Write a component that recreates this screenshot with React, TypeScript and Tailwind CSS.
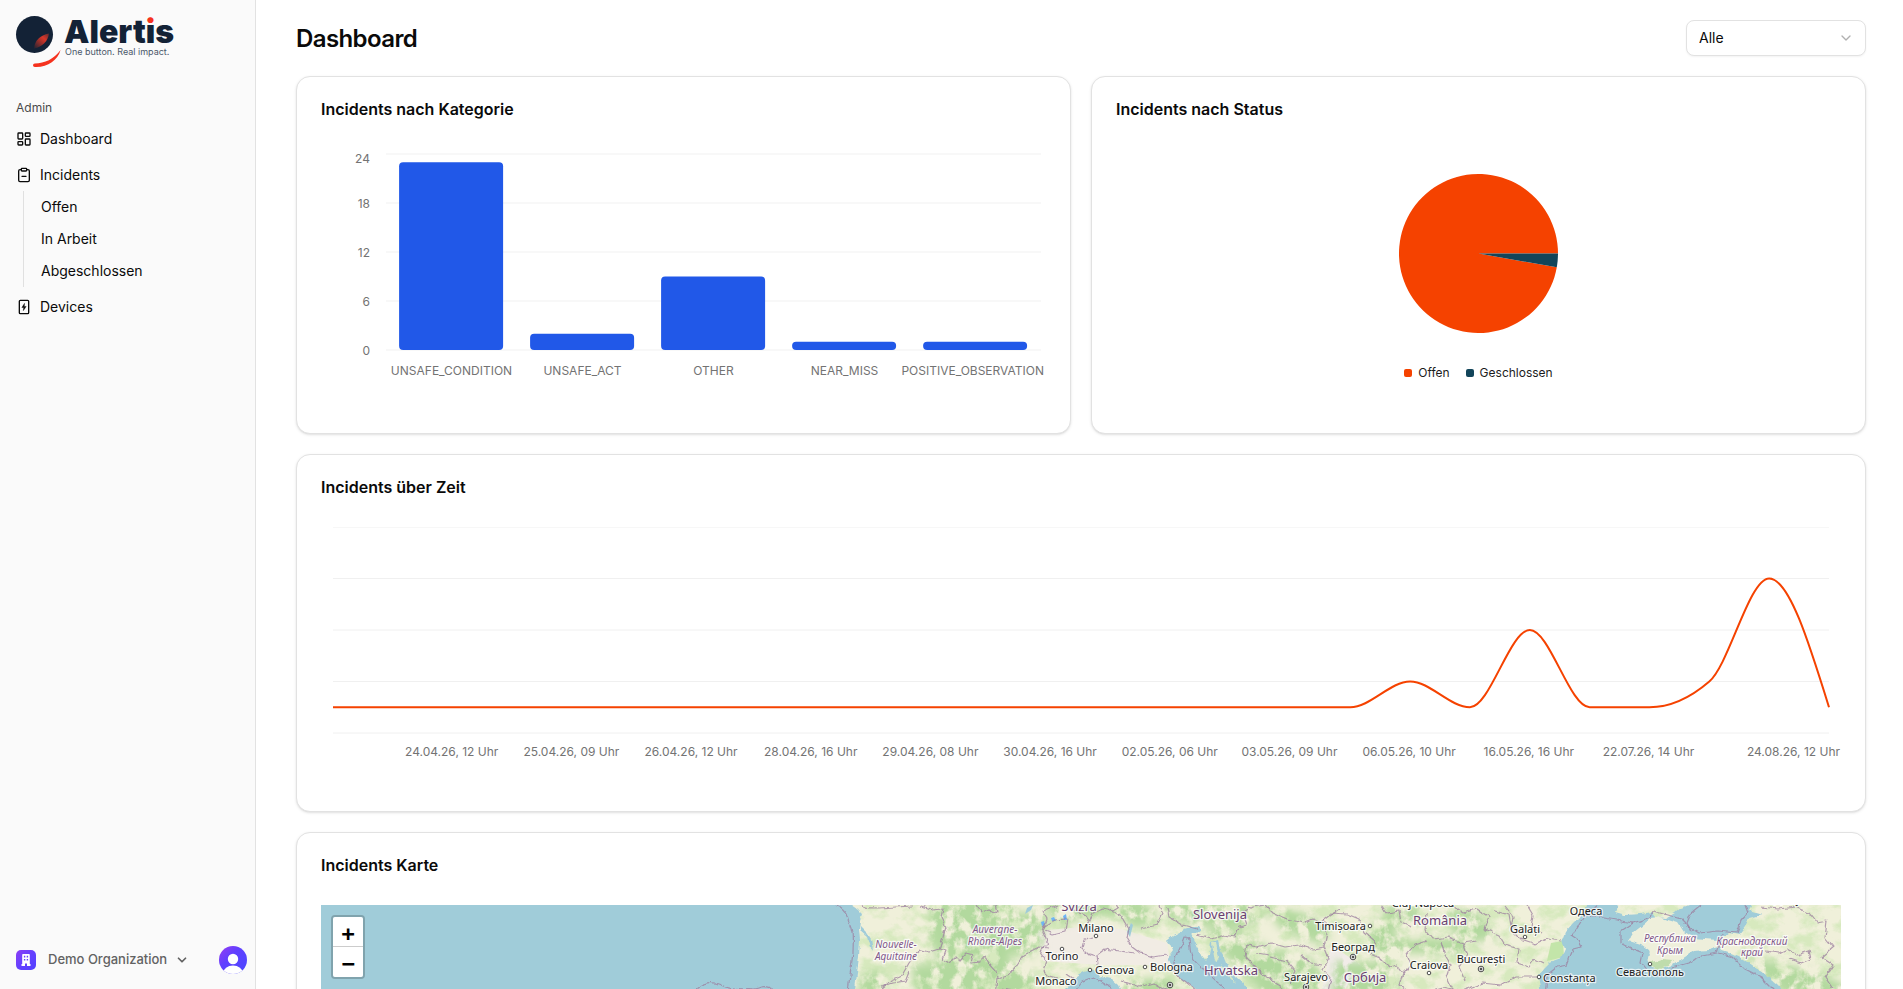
import { useLayoutEffect, useRef, useState } from "react";
import type { ReactNode } from "react";
import { ChevronDown, ClipboardMinus, LayoutDashboard } from "lucide-react";

const AXIS_TEXT = "fill-[#737373] text-xs";

function useWidth(initial: number) {
  const ref = useRef<HTMLDivElement>(null);
  const [width, setWidth] = useState(initial);
  useLayoutEffect(() => {
    const el = ref.current;
    if (!el) return;
    const update = () => setWidth(el.clientWidth);
    update();
    const observer = new ResizeObserver(update);
    observer.observe(el);
    return () => observer.disconnect();
  }, []);
  return { ref, width };
}

function Logo() {
  return (
    <svg width="168" height="56" viewBox="0 0 168 56" className="overflow-visible" role="img" aria-label="Alertis">
      <defs>
        <linearGradient id="leaf" x1="1" y1="0" x2="0.1" y2="1">
          <stop offset="0" stopColor="#5a2a30" />
          <stop offset="0.35" stopColor="#d8372a" />
          <stop offset="0.55" stopColor="#a93029" />
          <stop offset="1" stopColor="#2a2432" />
        </linearGradient>
        <linearGradient id="letter-i" gradientUnits="userSpaceOnUse" x1="0" y1="0" x2="0" y2="27">
          <stop offset="0.32" stopColor="#f5321e" />
          <stop offset="0.32" stopColor="#132236" />
        </linearGradient>
      </defs>
      <circle cx="18.5" cy="18.5" r="18.5" fill="#132236" />
      <path d="M18 32.5C18.5 25 24 19 33 17.5C32 25 26.5 31 18 32.5Z" fill="url(#leaf)" />
      <path
        d="M18.8 47.4C29 47.2 37.5 43.5 44.6 34C41.5 44.5 31.5 51.6 18.8 51A1.8 1.8 0 0 1 18.8 47.4Z"
        fill="#f5321e"
      />
      <text x="48" y="27" className="fill-[#132236] font-['Inter'] text-[32px] font-black">
        Alert
        <tspan fill="url(#letter-i)">i</tspan>s
      </text>
      <text x="49" y="39" className="fill-[#4b586a] font-['Inter'] text-[9px]">
        One button. Real impact.
      </text>
    </svg>
  );
}

function DeviceIcon() {
  return (
    <svg className="size-4" viewBox="0 0 24 24" fill="none" stroke="currentColor" strokeWidth="2" strokeLinejoin="round" aria-hidden="true">
      <rect x="5" y="2" width="14" height="20" rx="1.5" />
      <path d="M12.8 6.5L8.8 12.8H11.5L11 17.5L15.2 11.2H12.4Z" fill="currentColor" strokeWidth="0.6" />
    </svg>
  );
}

function NavItem({ icon, children }: { icon: ReactNode; children: ReactNode }) {
  return (
    <a href="#" className="flex h-8 items-center gap-2 px-4 text-sm text-neutral-950">
      {icon}
      {children}
    </a>
  );
}

function Sidebar() {
  return (
    <aside className="flex w-64 shrink-0 flex-col border-r border-[#e2e2e2] bg-[#fafafa]">
      <a href="#" className="block px-4 pt-4">
        <Logo />
      </a>
      <nav aria-label="Admin" className="mt-5 flex flex-1 flex-col">
        <div className="flex h-[31px] items-center px-4 text-xs text-[#4a4a4a]">Admin</div>
        <ul className="flex flex-col gap-1">
          <li>
            <NavItem icon={<LayoutDashboard className="size-4" />}>Dashboard</NavItem>
          </li>
          <li>
            <NavItem icon={<ClipboardMinus className="size-4" />}>Incidents</NavItem>
            <ul className="ml-[23px] border-l border-[#e0e0e0]">
              {["Offen", "In Arbeit", "Abgeschlossen"].map((label) => (
                <li key={label}>
                  <a href="#" className="flex h-8 items-center pl-[17px] text-sm text-neutral-950">
                    {label}
                  </a>
                </li>
              ))}
            </ul>
          </li>
          <li>
            <NavItem icon={<DeviceIcon />}>Devices</NavItem>
          </li>
        </ul>
      </nav>
      <div className="flex items-center justify-between pr-2 pb-[15px] pl-4">
        <button type="button" className="flex items-center gap-3 text-[13px] font-medium text-[#626262]">
          <span className="flex size-5 items-center justify-center rounded-[5px] bg-linear-to-br from-[#8b3df5] via-[#6340ff] to-[#5340ff]">
            <svg width="10" height="12" viewBox="0 0 10 12" aria-hidden="true">
              <path
                fill="#fff"
                fillRule="evenodd"
                d="M1.2 1C1.2.4 1.6 0 2.2 0H7.8C8.4 0 8.8.4 8.8 1V10H9.5V12H6V9.4H4V12H.5V10H1.2ZM2.9 1.8V3.4H4.3V1.8ZM5.7 1.8V3.4H7.1V1.8ZM2.9 5V6.6H4.3V5ZM5.7 5V6.6H7.1V5Z"
              />
            </svg>
          </span>
          <span className="flex items-center gap-2">
            Demo Organization
            <ChevronDown className="size-3.5" strokeWidth={3} />
          </span>
        </button>
        <button type="button" aria-label="Konto" className="size-7 overflow-hidden rounded-full">
          <svg viewBox="0 0 28 28" className="size-7" aria-hidden="true">
            <defs>
              <linearGradient id="avatar" x1="0" y1="0" x2="1" y2="1">
                <stop offset="0.1" stopColor="#8b3df5" />
                <stop offset="0.4" stopColor="#6040ff" />
                <stop offset="1" stopColor="#4a48ff" />
              </linearGradient>
            </defs>
            <rect width="28" height="28" fill="url(#avatar)" />
            <circle cx="14" cy="13" r="5.2" fill="#fff" />
            <ellipse cx="14" cy="27" rx="9.8" ry="7.4" fill="#fff" />
          </svg>
        </button>
      </div>
    </aside>
  );
}

function Card({ title, children }: { title: string; children: ReactNode }) {
  return (
    <section className="flex min-w-0 flex-col gap-8 rounded-[14px] border border-[#e2e2e2] bg-white p-6 shadow-sm">
      <h2 className="text-base leading-4 font-semibold">{title}</h2>
      {children}
    </section>
  );
}

const CATEGORIES = [
  { name: "UNSAFE_CONDITION", value: 23 },
  { name: "UNSAFE_ACT", value: 2 },
  { name: "OTHER", value: 9 },
  { name: "NEAR_MISS", value: 1 },
  { name: "POSITIVE_OBSERVATION", value: 1 },
];

function BarChart() {
  const { ref, width } = useWidth(725);
  const left = 65;
  const right = width - 5;
  const top = 5;
  const bottom = 201;
  const band = (right - left) / CATEGORIES.length;
  const y = (v: number) => bottom - (v / 24) * (bottom - top);
  return (
    <div ref={ref} className="h-65">
      <svg width={width} height="260" role="img" aria-label="Incidents nach Kategorie">
        {[0, 6, 12, 18, 24].map((tick) => (
          <g key={tick}>
            <line x1={left} x2={right} y1={y(tick)} y2={y(tick)} stroke="#f1f1f1" />
            <text x={left - 16} y={tick === 24 ? y(tick) + 9 : y(tick) + 5} textAnchor="end" className={AXIS_TEXT}>
              {tick}
            </text>
          </g>
        ))}
        {CATEGORIES.map((c, i) => {
          const last = i === CATEGORIES.length - 1;
          return (
            <g key={c.name}>
              <rect
                x={left + band * (i + 0.1)}
                y={y(c.value)}
                width={Math.floor(band * 0.8)}
                height={bottom - y(c.value)}
                rx="4"
                fill="#2158e8"
              />
              <text
                x={last ? width - 2 : left + band * (i + 0.5)}
                y={bottom + 25}
                textAnchor={last ? "end" : "middle"}
                className={AXIS_TEXT}
              >
                {c.name}
              </text>
            </g>
          );
        })}
      </svg>
    </div>
  );
}

function PieChart() {
  const r = 79.5;
  const angle = (10 * Math.PI) / 180;
  const x = r * Math.cos(angle);
  const y = r * Math.sin(angle);
  return (
    <div className="flex h-65 flex-col items-center pt-[25px]">
      <svg width="159" height="159" viewBox="-79.5 -79.5 159 159" role="img" aria-label="Incidents nach Status">
        <path d={`M0 0L${r} 0A${r} ${r} 0 1 0 ${x} ${y}Z`} fill="#f54200" />
        <path d={`M0 0L${r} 0A${r} ${r} 0 0 1 ${x} ${y}Z`} fill="#12455a" />
      </svg>
      <ul className="mt-8 flex items-center gap-4 text-xs text-[#1c1c1c]">
        <li className="flex items-center gap-1.5">
          <span className="size-2 rounded-xs bg-[#f54200]" />
          Offen
        </li>
        <li className="flex items-center gap-1.5">
          <span className="size-2 rounded-xs bg-[#12455a]" />
          Geschlossen
        </li>
      </ul>
    </div>
  );
}

const TIMELINE = [1, 1, 1, 1, 1, 1, 1, 1, 1, 1, 1, 1, 1, 1, 1, 1, 1, 1, 2, 1, 4, 1, 1, 2, 6, 1];

const TIME_LABELS = [
  { index: 2, text: "24.04.26, 12 Uhr" },
  { index: 4, text: "25.04.26, 09 Uhr" },
  { index: 6, text: "26.04.26, 12 Uhr" },
  { index: 8, text: "28.04.26, 16 Uhr" },
  { index: 10, text: "29.04.26, 08 Uhr" },
  { index: 12, text: "30.04.26, 16 Uhr" },
  { index: 14, text: "02.05.26, 06 Uhr" },
  { index: 16, text: "03.05.26, 09 Uhr" },
  { index: 18, text: "06.05.26, 10 Uhr" },
  { index: 20, text: "16.05.26, 16 Uhr" },
  { index: 22, text: "22.07.26, 14 Uhr" },
  { index: 25, text: "24.08.26, 12 Uhr" },
];

// Monotone cubic interpolation over evenly spaced points.
function monotonePath(xs: number[], ys: number[]) {
  const n = xs.length;
  const h = xs[1] - xs[0];
  const slopes = ys.slice(1).map((v, i) => (v - ys[i]) / h);
  const tangents = ys.map((_, i) => {
    if (i === 0 || i === n - 1) return 0;
    const a = slopes[i - 1];
    const b = slopes[i];
    const p = (a + b) / 2;
    return (Math.sign(a) + Math.sign(b)) * Math.min(Math.abs(a), Math.abs(b), 0.5 * Math.abs(p)) || 0;
  });
  tangents[0] = (3 * slopes[0] - tangents[1]) / 2;
  tangents[n - 1] = (3 * slopes[n - 2] - tangents[n - 2]) / 2;
  let d = `M${xs[0]} ${ys[0]}`;
  for (let i = 1; i < n; i++) {
    const t = h / 3;
    d += `C${xs[i - 1] + t} ${ys[i - 1] + t * tangents[i - 1]} ${xs[i] - t} ${ys[i] - t * tangents[i]} ${xs[i]} ${ys[i]}`;
  }
  return d;
}

function LineChart() {
  const { ref, width } = useWidth(1520);
  const left = 12;
  const right = width - 12;
  const bottom = 206;
  const y = (v: number) => bottom - (v / 8) * bottom;
  const x = (i: number) => left + (i * (right - left)) / (TIMELINE.length - 1);
  return (
    <div ref={ref} className="h-65">
      <svg width={width} height="260" role="img" aria-label="Incidents über Zeit">
        {[0, 2, 4, 6, 8].map((tick) => (
          <line key={tick} x1={left} x2={right} y1={y(tick)} y2={y(tick)} stroke="#f0f0f0" />
        ))}
        <path
          d={monotonePath(TIMELINE.map((_, i) => x(i)), TIMELINE.map(y))}
          fill="none"
          stroke="#f54200"
          strokeWidth="2"
        />
        {TIME_LABELS.map((label) => {
          const last = label.index === TIMELINE.length - 1;
          return (
            <text
              key={label.text}
              x={last ? width - 1 : x(label.index) - 1}
              y={bottom + 23}
              textAnchor={last ? "end" : "middle"}
              className={AXIS_TEXT}
            >
              {label.text}
            </text>
          );
        })}
      </svg>
    </div>
  );
}

type Place = { x: number; y: number; text: string; anchor?: "start" | "middle" | "end" };

const CITIES: Place[] = [
  { x: 775, y: 27, text: "Milano" },
  { x: 741, y: 55, text: "Torino" },
  { x: 774, y: 69, text: "Genova", anchor: "start" },
  { x: 829, y: 66, text: "Bologna", anchor: "start" },
  { x: 735, y: 80, text: "Monaco" },
  { x: 985, y: 76, text: "Sarajevo" },
  { x: 1045, y: 25, text: "Timișoara", anchor: "end" },
  { x: 1032, y: 46, text: "Београд" },
  { x: 1102, y: 2, text: "Cluj-Napoca" },
  { x: 1204, y: 28, text: "Galați" },
  { x: 1160, y: 58, text: "București" },
  { x: 1108, y: 64, text: "Craiova" },
  { x: 1222, y: 77, text: "Constanța", anchor: "start" },
  { x: 1265, y: 10, text: "Одеса" },
  { x: 1329, y: 71, text: "Севастополь" },
  { x: 1480, y: -2, text: "Ростов-на-Дону", anchor: "end" },
];

const COUNTRIES: Place[] = [
  { x: 758, y: 6, text: "Svizra" },
  { x: 899, y: 14, text: "Slovenija" },
  { x: 910, y: 70, text: "Hrvatska" },
  { x: 1119, y: 20, text: "România" },
  { x: 1044, y: 77, text: "Србија" },
];

const REGIONS: Place[] = [
  { x: 674, y: 28, text: "Auvergne-" },
  { x: 674, y: 40, text: "Rhône-Alpes" },
  { x: 575, y: 43, text: "Nouvelle-" },
  { x: 575, y: 55, text: "Aquitaine" },
  { x: 1349, y: 37, text: "Республика" },
  { x: 1349, y: 49, text: "Крым" },
  { x: 1431, y: 40, text: "Краснодарский" },
  { x: 1431, y: 51, text: "край" },
];

const TOWN_MARKS = [
  [775, 31], [741, 44], [769, 65], [824, 62], [1049, 21], [1204, 32], [1108, 68], [1218, 72], [1329, 59],
];

const CAPITAL_MARKS = [
  [849, 80], [985, 82], [1032, 52], [1160, 64],
];

const SEAS = [
  "M-10 -10H526L530 0L536 4L541 9L539 15L538 25L539 35L538 52L536 68L534 84L530 120L500 140L400 150L-10 160Z",
  "M539 20L545 26L550 34L552 46L549 42L546 32L539 26Z",
  "M730 92L745 84L755 72L763 67L770 65L775 66L780 72L791 74L798 80L801 86L812 130L800 200H640L660 110Z",
  "M846 35L852 30L863 24L870 22L878 21L881 25L876 29L870 29L873 36L876 43L882 52L885 56L888 50L890 38L897 36L899 45L904 53L908 63L915 72L923 79L932 88L990 150L940 160L875 84L862 75L855 68L850 59L847 53L852 46L849 39Z",
  "M1268 -6H1300L1294 7L1305 10L1320 9L1331 7L1335 12L1345 13L1354 8L1360 3L1384 -6H1434L1428 6L1441 10L1428 13L1424 22L1418 30L1408 28L1403 32L1398 40L1401 46L1411 49L1422 54L1430 60L1445 70L1455 78L1461 84L1520 120V240H1200L1219 84L1217 70L1223 63L1229 57L1240 53L1244 44L1241 35L1244 27L1252 18L1264 6Z",
];

const BORDERS = [
  "M516 0C524 6 528 12 529 18C534 28 532 36 532 48C530 62 528 76 527 90",
  "M540 0C546 5 552 2 558 3L575 2L592 1M600 1L612 5L622 4L620 12L625 22L622 32L618 44L625 46L622 54L628 58L634 52L638 56L645 48L652 50L650 58L660 57L664 52L668 58",
  "M618 44L608 47L600 45L594 50L588 58L580 72L570 76L560 84",
  "M655 0L660 7L668 4L676 8L674 0",
  "M668 58L675 66L676 74L688 70L694 62L702 50L710 46L718 42L728 43",
  "M560 82L572 78L584 76L588 66M676 74L674 90M665 92L680 84L694 86",
  "M736 0L721 6L726 14L722 26L727 38L719 46L726 56L722 66L728 72L736 74",
  "M722 22L734 15L746 14L744 26L732 29L724 26",
  "M748 0L752 6L762 8L768 17L772 8L782 4L790 6L797 2L794 -4",
  "M790 6L800 10L808 24L806 32L812 42L820 48L832 52L846 50",
  "M777 60L776 50L784 44L798 46L814 48M760 42L768 50L776 52M762 42L764 34L772 32",
  "M800 76L818 82L832 78L842 84L860 90M745 69L752 74",
  "M820 24L836 20L842 8L838 0M846 2L848 12L862 20L876 24",
  "M876 30L890 34L904 30L914 32L918 22L926 20L922 8L932 2L944 0",
  "M944 0L952 8L966 14L982 18L992 14L1000 18L1010 10L1019 4",
  "M926 40L936 42L950 38L964 42L978 40L992 44L1003 42",
  "M926 40L924 52L934 62L946 72L958 80L972 92",
  "M1003 14L1006 28L1003 42L1008 54L1002 64L1010 74L1006 90",
  "M950 52L966 56L974 66L968 78M980 50L990 58L1000 60M936 48L948 50",
  "M1009 8L1026 9L1038 14L1044 28L1054 36L1050 50L1060 54L1068 62L1076 60L1082 68L1078 80L1090 88",
  "M1082 68L1090 60L1086 50L1094 40L1106 36M1106 8L1104 24L1112 34L1128 32L1142 38L1156 36",
  "M1120 36L1124 50L1130 60L1126 72L1132 84M1142 38L1146 50L1138 62L1144 76",
  "M1060 0L1066 8L1078 6L1080 18L1090 22M1130 0L1142 8L1156 4L1168 12L1164 24L1178 30L1184 40",
  "M1174 6L1188 10L1190 22L1200 26M1184 40L1198 44L1196 58L1208 62L1214 54L1222 58",
  "M1184 2L1192 12L1190 24L1202 36L1214 40L1226 34L1240 36M1206 0L1212 10L1210 22L1222 28",
  "M1066 92L1084 86L1100 88L1122 82L1140 86L1162 78L1180 80L1194 72L1218 72",
  "M1276 0L1266 8L1256 24L1250 30L1256 34L1260 42L1252 44L1246 60L1236 62L1226 70L1224 92",
  "M1266 10L1290 14L1312 18L1330 12L1332 6L1346 10L1360 14L1368 22L1378 28L1396 26L1416 28L1420 16L1427 8L1424 0",
  "M1312 18L1300 26L1300 38L1312 44L1322 48L1320 58L1326 66L1340 70L1354 62L1368 58L1376 52L1396 48L1398 42L1401 30",
  "M1398 48L1412 52L1424 64L1440 72L1452 84L1456 92",
  "M1380 0L1370 8L1366 18L1370 26M1440 2L1458 4L1474 2L1488 8L1496 18L1506 16L1504 32L1512 42L1500 52L1512 60L1504 72L1512 84",
  "M1444 46L1458 48L1466 44L1476 50L1488 46L1490 54L1480 58L1468 54",
  "M754 86L762 76L772 72L784 78L790 84L794 92",
  "M882 92C868 76 852 72 852 62C854 48 862 40 864 32C872 32 866 44 872 54C880 64 896 74 912 94",
  "M375 84C382 78 390 75 400 80C412 86 430 86 440 82C448 80 454 86 462 90",
];

const FORESTS = [
  "M612 -6L690 -8L700 20L688 60L650 66L616 54L606 24Z",
  "M540 70L560 64L568 80L556 120L534 110Z",
  "M690 10L724 4L722 40L706 54L690 46Z",
  "M590 60L640 56L700 60L720 76L740 100L600 110Z",
  "M722 -4L820 -6L838 14L816 24L790 10L760 14L736 20Z",
  "M836 -6L936 -4L944 14L914 24L870 20L846 12Z",
  "M800 76L846 72L870 100L810 110Z",
  "M884 24L920 26L950 44L990 52L1004 80L1000 110L950 100L920 66L898 46Z",
  "M942 0L960 24L1000 40L1010 30L990 10Z",
  "M1052 18L1076 8L1074 32L1090 36L1150 30L1146 50L1080 48L1062 60L1044 40Z",
  "M1126 4L1156 6L1178 32L1152 38L1130 26Z",
  "M1014 56L1070 58L1080 84L1060 110L1010 100Z",
  "M1424 54L1450 56L1500 68L1530 84V120L1470 96Z",
  "M1326 56L1346 54L1354 62L1338 68Z",
  "M1060 -4L1080 4L1100 0L1096 24L1070 20Z",
];

function MapLabels({ places, className }: { places: Place[]; className: string }) {
  return (
    <g className={className} stroke="#fff" strokeOpacity="0.75" strokeWidth="2.5" strokeLinejoin="round" paintOrder="stroke">
      {places.map((p) => (
        <text key={p.text} x={p.x} y={p.y} textAnchor={p.anchor ?? "middle"}>
          {p.text}
        </text>
      ))}
    </g>
  );
}

function IncidentMap() {
  return (
    <div className="relative h-80 overflow-hidden bg-[#a0ccd9]">
      <svg className="size-full" viewBox="0 0 1520 320" preserveAspectRatio="xMidYMin slice" role="img" aria-label="Incidents Karte">
        <defs>
          <filter id="relief" x="0" y="0" width="100%" height="100%" colorInterpolationFilters="sRGB">
            <feTurbulence type="fractalNoise" baseFrequency="0.05 0.07" numOctaves="5" seed="8" />
            <feColorMatrix values="0 0 0 0 0.78  0 0 0 0 0.9  0 0 0 0 0.68  0 4 0 0 -1.75" />
          </filter>
          <filter id="woods" x="-10%" y="-10%" width="120%" height="120%" colorInterpolationFilters="sRGB">
            <feGaussianBlur in="SourceAlpha" stdDeviation="4" result="area" />
            <feTurbulence type="fractalNoise" baseFrequency="0.09 0.07" numOctaves="5" seed="3" />
            <feColorMatrix values="0 0 0 0 0.7  0 0 0 0 0.85  0 0 0 0 0.62  0 4.5 0 0 -1.6" />
            <feComposite in2="area" operator="in" />
          </filter>
          <filter id="shore" x="-2%" y="-2%" width="104%" height="104%" colorInterpolationFilters="sRGB">
            <feTurbulence type="fractalNoise" baseFrequency="0.12" numOctaves="3" seed="5" />
            <feDisplacementMap in="SourceGraphic" scale="5" xChannelSelector="R" yChannelSelector="G" />
          </filter>
        </defs>
        <rect x="500" width="1020" height="320" fill="#f0f0da" />
        <rect x="520" width="1000" height="320" filter="url(#relief)" opacity="0.6" />
        <path d="M716 26L760 22L800 24L846 38L850 60L780 60L722 56Z" fill="#f1ece4" />
        <path d="M1010 40L1040 60L1020 90H1000Z" fill="#f1ece8" />
        <g filter="url(#woods)">
          {FORESTS.map((d) => (
            <path key={d} d={d} />
          ))}
        </g>
        <path d="M1230 38L1242 36L1243 52L1226 56Z" fill="#c3e5a9" />
        <g filter="url(#shore)">
          {SEAS.map((d) => (
            <path key={d} d={d} fill="#a0ccd9" />
          ))}
          <path
            d="M1307 36L1313 27L1322 20L1330 13L1339 12L1347 15L1357 18L1363 27L1372 33L1384 34L1397 35L1398 42L1388 45L1373 46L1361 54L1352 60L1339 65L1330 63L1327 58L1329 50L1327 45L1320 40Z"
            fill="#eeefdb"
          />
          <path d="M1328 58L1340 54L1352 55L1346 62L1336 65L1330 62Z" fill="#bfdcac" />
          <path d="M891 38L894 38L897 52L894 58ZM900 60L908 66L914 78L906 70Z" fill="#d9e8c4" />
        </g>
        <g fill="#6db5f5">
          <path d="M720 17L723 16L724 20L721 21ZM730 13L733 12L735 16L731 16ZM742 11L745 9L746 15L743 15Z" />
          <path d="M706 3L712 0L710 5L704 9Z" fill="#a0ccd9" />
          <path d="M806 27L810 18L812 20L809 32Z" fill="#a0ccd9" />
        </g>
        <g filter="url(#shore)" fill="none" stroke="#9c7f9f" strokeOpacity="0.75" strokeWidth="1.2" strokeLinejoin="round">
          {BORDERS.map((d) => (
            <path key={d} d={d} />
          ))}
        </g>
        <g fill="#fff" stroke="#4a4a4a" strokeWidth="1">
          {TOWN_MARKS.map(([x, y]) => (
            <circle key={x} cx={x} cy={y} r="1.8" />
          ))}
          {CAPITAL_MARKS.map(([x, y]) => (
            <g key={x}>
              <circle cx={x} cy={y} r="2.8" />
              <circle cx={x} cy={y} r="1" fill="#333" />
            </g>
          ))}
        </g>
        <MapLabels places={REGIONS} className="fill-[#81588a] font-['Noto_Sans'] text-[10px] italic" />
        <MapLabels places={COUNTRIES} className="fill-[#6a4070] font-['Noto_Sans'] text-[13px]" />
        <MapLabels places={CITIES} className="fill-[#222] font-['Noto_Sans'] text-[11px]" />
      </svg>
      <div className="absolute top-2.5 left-2.5 flex flex-col rounded-sm border-2 border-black/20 bg-clip-padding font-['DejaVu_Sans_Mono',monospace] text-[22px] leading-none font-bold text-black">
        <button type="button" aria-label="Zoom in" className="h-[30px] w-[30px] rounded-t-xs border-b border-[#ccc] bg-white pt-1">
          +
        </button>
        <button type="button" aria-label="Zoom out" className="h-[30px] w-[30px] rounded-b-xs bg-white pt-1">
          −
        </button>
      </div>
    </div>
  );
}

export default function App() {
  return (
    <div className="flex h-screen bg-white font-['Inter',sans-serif] text-neutral-950">
      <Sidebar />
      <main className="flex min-w-0 flex-1 flex-col gap-5 overflow-y-auto pt-5 pr-[37px] pl-10 [scrollbar-width:none] *:shrink-0">
        <header className="flex h-9 items-center justify-between">
          <h1 className="pt-0.5 text-2xl font-semibold tracking-tight">Dashboard</h1>
          <div className="relative w-45">
            <select
              aria-label="Organisation"
              className="h-9 w-full appearance-none rounded-lg border border-[#e2e2e2] bg-white px-3 text-sm shadow-xs"
            >
              <option>Alle</option>
            </select>
            <ChevronDown className="pointer-events-none absolute top-2.5 right-3 size-4 text-[#b0b0b0]" />
          </div>
        </header>
        <div className="grid grid-cols-2 gap-5">
          <Card title="Incidents nach Kategorie">
            <BarChart />
          </Card>
          <Card title="Incidents nach Status">
            <PieChart />
          </Card>
        </div>
        <Card title="Incidents über Zeit">
          <LineChart />
        </Card>
        <Card title="Incidents Karte">
          <IncidentMap />
        </Card>
      </main>
    </div>
  );
}
